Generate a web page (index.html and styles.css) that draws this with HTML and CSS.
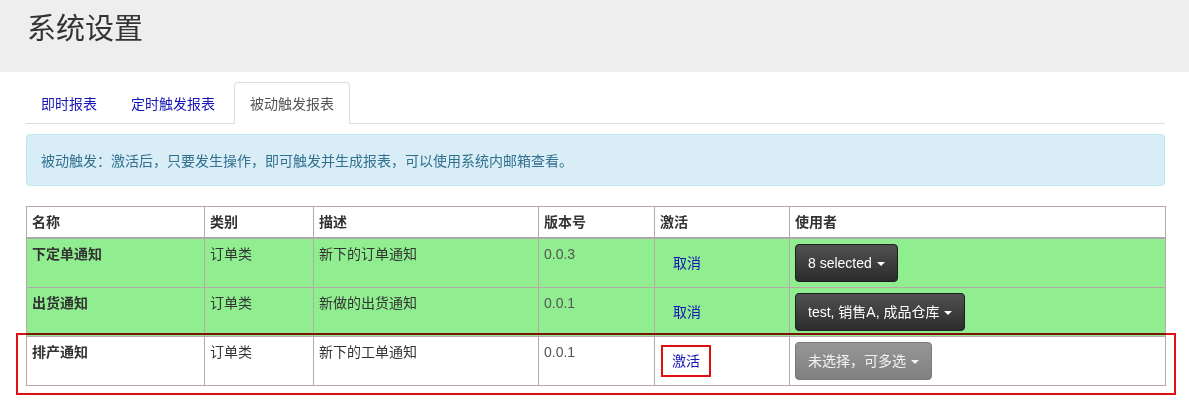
FILE: index.html
```html
<!DOCTYPE html>
<html lang="zh-CN">
<head>
<meta charset="utf-8">
<title>系统设置</title>
<link rel="stylesheet" href="styles.css">
</head>
<body>
<div class="page-header">
  <h1 class="title">系统设置</h1>
</div>
<div class="container">
  <ul class="nav-tabs">
    <li><a href="#">即时报表</a></li>
    <li><a href="#">定时触发报表</a></li>
    <li class="active"><a href="#">被动触发报表</a></li>
  </ul>
  <div class="tab-content">
    <div class="alert">被动触发：激活后，只要发生操作，即可触发并生成报表，可以使用系统内邮箱查看。</div>
    <div class="table-wrap">
      <table class="report-table">
        <colgroup>
          <col class="c1"><col class="c2"><col class="c3"><col class="c4"><col class="c5"><col class="c6">
        </colgroup>
        <thead>
          <tr><th>名称</th><th>类别</th><th>描述</th><th>版本号</th><th>激活</th><th>使用者</th></tr>
        </thead>
        <tbody>
          <tr class="on">
            <td class="name">下定单通知</td>
            <td>订单类</td>
            <td>新下的订单通知</td>
            <td class="ver">0.0.3</td>
            <td><a class="btn-link" href="#">取消</a></td>
            <td><span class="btn btn-dark">8 selected<span class="caret"></span></span></td>
          </tr>
          <tr class="on">
            <td class="name">出货通知</td>
            <td>订单类</td>
            <td>新做的出货通知</td>
            <td class="ver">0.0.1</td>
            <td><a class="btn-link" href="#">取消</a></td>
            <td><span class="btn btn-dark">test, 销售A, 成品仓库<span class="caret"></span></span></td>
          </tr>
          <tr>
            <td class="name">排产通知</td>
            <td>订单类</td>
            <td>新下的工单通知</td>
            <td class="ver">0.0.1</td>
            <td><a class="btn-link marked" href="#">激活</a></td>
            <td><span class="btn btn-muted">未选择，可多选<span class="caret"></span></span></td>
          </tr>
        </tbody>
      </table>
      <div class="annot-box"></div>
    </div>
  </div>
</div>
</body>
</html>
```

FILE: styles.css
```css
* { box-sizing: border-box; }

html, body {
  margin: 0;
  padding: 0;
  background: #fff;
}

body {
  font-family: "Liberation Sans", "Noto Sans CJK SC", sans-serif;
  font-size: 14px;
  line-height: 20px;
  color: #333;
  min-height: 409px;
  padding-bottom: 24px;
}

.page-header {
  background: #eee;
  height: 72px;
  padding: 9px 0 0 27px;
}

.title {
  margin: 0;
  font-family: "Noto Sans CJK SC", sans-serif;
  font-weight: 400;
  font-size: 29px;
  line-height: 34px;
  color: #333;
}

.container {
  padding: 0 24px 0 26px;
}

.nav-tabs {
  list-style: none;
  margin: 10px 0 0;
  padding: 0;
  display: flex;
  border-bottom: 1px solid #ddd;
}

.nav-tabs li {
  margin-bottom: -1px;
}

.nav-tabs a {
  display: block;
  padding: 10px 15px;
  margin-right: 2px;
  line-height: 20px;
  border: 1px solid transparent;
  border-radius: 4px 4px 0 0;
  color: #1515b5;
  text-decoration: none;
  font-family: "Noto Sans CJK SC", sans-serif;
}

.nav-tabs li:first-child a {
  padding-left: 14px;
}

.nav-tabs li:nth-child(2) a {
  padding-right: 16px;
}

.nav-tabs .active a {
  color: #555;
  background: #fff;
  border-color: #ddd #ddd transparent;
}

.tab-content {
  padding-top: 10px;
}

.alert {
  padding: 15px 14px;
  margin-bottom: 20px;
  border: 1px solid #bce8f1;
  border-radius: 4px;
  background: #d9edf7;
  color: #31708f;
  font-family: "Noto Sans CJK SC", sans-serif;
}

.table-wrap {
  position: relative;
}

.report-table {
  width: 100%;
  table-layout: fixed;
  border-collapse: collapse;
  border: 1px solid #b8a8a8;
}

.c1 { width: 178px; }
.c2 { width: 109px; }
.c3 { width: 225px; }
.c4 { width: 116px; }
.c5 { width: 135px; }
.c6 { width: 376px; }

.report-table th,
.report-table td {
  border: 1px solid #b8a8a8;
  padding: 5px 5px;
  text-align: left;
  vertical-align: top;
  line-height: 20px;
}

.report-table th {
  font-weight: 700;
  border-bottom: 2px solid #aaa;
}

.report-table tr.on td {
  background: #90ee90;
}

.name { font-weight: 700; }

.ver { color: #555; }

.btn-link {
  display: inline-block;
  padding: 8px 12px;
  border: 1px solid transparent;
  color: #1515b5;
  text-decoration: none;
}

.btn-link.marked {
  border: 2px solid #e01010;
  padding: 4px 9px;
  margin: 3px 1px;
}

.btn {
  display: inline-block;
  padding: 8px 12px;
  line-height: 20px;
  border-radius: 4px;
  color: #fff;
  white-space: nowrap;
}

.btn-dark {
  background: linear-gradient(#515151, #2b2b2b);
  border: 1px solid #1e1e1e;
}

.btn-muted {
  background: linear-gradient(#969696, #808080);
  border: 1px solid #7a7a7a;
  color: #f2f2f2;
}

.caret {
  display: inline-block;
  width: 0;
  height: 0;
  margin-left: 5px;
  vertical-align: middle;
  border-top: 4px solid currentColor;
  border-left: 4px solid transparent;
  border-right: 4px solid transparent;
}

.annot-box {
  position: absolute;
  left: -10px;
  top: 127px;
  width: 1160px;
  height: 62px;
  border: 2px solid #e01010;
  mix-blend-mode: multiply;
  pointer-events: none;
}
```
